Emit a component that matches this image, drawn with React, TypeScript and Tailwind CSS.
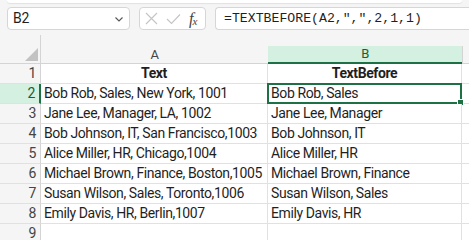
import React from 'react';

const rows: [string, string][] = [
  ['Bob Rob, Sales, New York, 1001', 'Bob Rob, Sales'],
  ['Jane Lee, Manager, LA, 1002', 'Jane Lee, Manager'],
  ['Bob Johnson, IT, San Francisco,1003', 'Bob Johnson, IT'],
  ['Alice Miller, HR, Chicago,1004', 'Alice Miller, HR'],
  ['Michael Brown, Finance, Boston,1005', 'Michael Brown, Finance'],
  ['Susan Wilson, Sales, Toronto,1006', 'Susan Wilson, Sales'],
  ['Emily Davis, HR, Berlin,1007', 'Emily Davis, HR'],
  ['', ''],
];

export default function App() {
  return (
    <div
      className="relative w-[469px] h-[240px] overflow-hidden bg-[#f5f5f5] text-[#1f1f1f]"
      style={{ fontFamily: 'Roboto, "Liberation Sans", sans-serif' }}
    >
      {/* ribbon edge */}
      <div className="mx-[7px] h-[3px] rounded-b-md bg-white shadow-[0_1px_1px_rgba(0,0,0,0.08)]" />

      {/* formula bar */}
      <div className="flex items-center gap-[9px] pl-[7px] mt-[4px] h-[23px]">
        <div className="flex items-center justify-between w-[123px] h-[23px] bg-white border border-[#d6d6d6] rounded-[4px] pl-[5px] pr-[5px]">
          <span className="text-[14px] tracking-[-0.3px]">B2</span>
          <svg width="10" height="10" viewBox="0 0 10 10" fill="none" stroke="#555" strokeWidth="1.1">
            <path d="M1.5 3.5 L5 7 L8.5 3.5" />
          </svg>
        </div>
        <div className="flex items-center gap-[8px] w-[67px] h-[23px] bg-white border border-[#d6d6d6] rounded-[4px] pl-[5px]">
          <svg width="13" height="13" viewBox="0 0 13 13" stroke="#c4c4c4" strokeWidth="1.1">
            <path d="M1 1 L12 12 M12 1 L1 12" />
          </svg>
          <svg width="15" height="12" viewBox="0 0 15 12" fill="none" stroke="#c4c4c4" strokeWidth="1.1">
            <path d="M1 6 L5.5 10.5 L14 1.5" />
          </svg>
          <span className="flex items-end text-[#444] leading-none" style={{ fontFamily: '"Liberation Serif", serif' }}>
            <span className="italic text-[16px]">f</span>
            <span className="italic text-[11px] -ml-[1px]">x</span>
          </span>
        </div>
        <div className="flex-1 h-[23px] bg-white border border-[#d6d6d6] rounded-l-[4px] border-r-0 pl-[8px] flex items-center">
          <span className="text-[13.2px]" style={{ fontFamily: '"Liberation Mono", monospace' }}>
            =TEXTBEFORE(A2,",",2,1,1)
          </span>
        </div>
      </div>

      {/* grid */}
      <div className="mt-[5px] grid grid-cols-[41px_227px_194px_1fr] text-[14px] tracking-[-0.4px]">
        {/* corner */}
        <div className="row-span-2 relative border-r border-[#d4d4d4] border-b">
          <svg className="absolute right-[2px] bottom-[2px]" width="13" height="13" viewBox="0 0 13 13">
            <path d="M13 0 L13 13 L0 13 Z" fill="#c2c2c2" />
          </svg>
        </div>
        <div className="col-span-3 h-[11px]" />
        <div className="h-[18px] flex items-center justify-center text-[13px] text-[#444] border-b border-[#d4d4d4]">A</div>
        <div className="h-[18px] flex items-center justify-center text-[13px] text-[#1e5c3a] bg-[#d3f0e0] border-b-2 border-[#1e7145]">B</div>
        <div className="h-[18px] border-l border-[#d4d4d4] border-b border-b-[#d4d4d4]" />

        {/* row 1 */}
        <div className="h-[20px] flex items-center justify-end pr-[4px] text-[#444] border-r border-b border-[#e1e1e1] border-r-[#d4d4d4]">1</div>
        <div className="h-[20px] flex items-center justify-center font-bold bg-white border-r border-b border-[#e1e1e1]">Text</div>
        <div className="h-[20px] flex items-center justify-center font-bold bg-white border-r border-b border-[#e1e1e1]">TextBefore</div>
        <div className="h-[20px] bg-white border-b border-[#e1e1e1]" />

        {rows.map(([a, b], i) => {
          const sel = i === 0;
          return (
            <React.Fragment key={i}>
              <div
                className={
                  sel
                    ? 'h-[20px] flex items-center justify-end pr-[4px] text-[#1e5c3a] bg-[#d3f0e0] border-r-2 border-r-[#1e7145] border-b border-b-[#e1e1e1]'
                    : 'h-[20px] flex items-center justify-end pr-[4px] text-[#444] border-r border-r-[#d4d4d4] border-b border-b-[#e1e1e1]'
                }
              >
                {i + 2}
              </div>
              <div className="h-[20px] flex items-center pl-[3px] bg-white border-r border-b border-[#e1e1e1] whitespace-nowrap overflow-hidden">{a}</div>
              <div className="relative h-[20px] flex items-center pl-[3px] bg-white border-r border-b border-[#e1e1e1] whitespace-nowrap">
                {b}
                {sel && (
                  <>
                    <div className="absolute -left-[1px] -top-[1px] -right-[1px] -bottom-[1px] border-2 border-[#1e7145] pointer-events-none" />
                    <div className="absolute -right-[3px] -bottom-[3px] w-[5px] h-[5px] bg-[#1e7145] border border-white box-content" />
                  </>
                )}
              </div>
              <div className="h-[20px] bg-white border-b border-[#e1e1e1]" />
            </React.Fragment>
          );
        })}
      </div>
    </div>
  );
}
